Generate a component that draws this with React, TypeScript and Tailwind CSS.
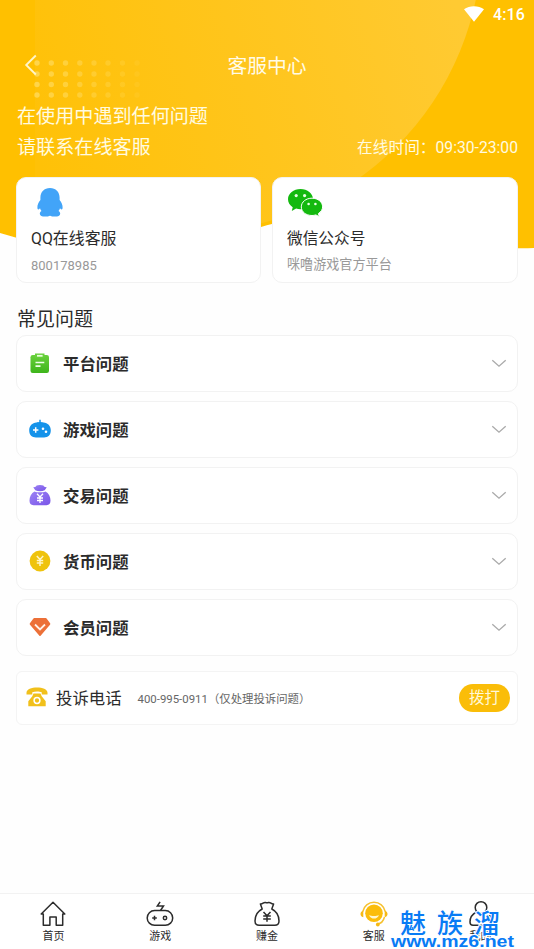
import React from "react";

const QQIcon = () => (
  <svg width="26" height="29" viewBox="0 0 26 29" fill="#42a4f8">
    <path d="M13 0C7.200 0 3.400 4 3.400 9.500v2.600C1.500 14.500.2 17 .4 20c.1 1.700 1.100 1.900 2.600.2.300 1 .8 1.900 1.500 2.700-1.200.7-1.700 1.700-1.700 2.900C2.800 28 5 28.600 8 28.600c2.200 0 4-.4 5-.9 1 .5 2.800.9 5 .9 3 0 5.200-.6 5.200-2.800 0-1.200-.5-2.200-1.700-2.900.7-.8 1.200-1.700 1.500-2.700 1.500 1.700 2.500 1.500 2.600-.2.200-3-1.100-5.500-3-7.900V9.500C22.600 4 18.800 0 13 0Z" />
  </svg>
);

const WechatIcon = () => (
  <svg width="35" height="28" viewBox="0 0 35 28">
    <path fill="#14b90f" d="M12.500 0C5.600 0 0 4.500 0 10.200c0 3.200 1.700 6 4.700 8L3.800 22l4.300-2.400c1.400.4 2.900.6 4.400.6 6.900 0 12.500-4.400 12.500-10C25 4.500 19.400 0 12.500 0Z" />
    <path fill="#14b90f" stroke="#fff" strokeWidth="1" d="M24 9.200c-6.100 0-10.700 3.800-10.700 8.700S17.900 26.500 24 26.500c1.300 0 2.600-.2 3.800-.6l3.500 1.800-.9-3.200c2.600-1.700 4.200-4 4.200-6.600 0-4.900-4.500-8.700-10.600-8.700Z" />
    <g fill="#e8ffe4"><circle cx="8.200" cy="6.600" r="1.600" /><circle cx="16.600" cy="6.600" r="1.600" /><circle cx="20.600" cy="15" r="1.300" /><circle cx="27.400" cy="15" r="1.300" /></g>
  </svg>
);

const PlatformIcon = () => (
  <svg width="22" height="22" viewBox="0 0 22 22">
    <defs><linearGradient id="green" x1="0" y1="0" x2="0" y2="1"><stop stopColor="#68d03b" /><stop offset="1" stopColor="#3eb51b" /></linearGradient></defs>
    <rect x="1.500" y="3" width="18.500" height="18" rx="2.200" fill="url(#green)" />
    <path d="M6 1.500h9.500v4.200H6Z" fill="#68d03b" /><path d="M8 2.900h5.600v1.800H8Z" fill="#eaffdf" />
    <path d="M6.500 10.500h8.800M6.500 14.200h5" stroke="#efffe9" strokeWidth="1.700" />
  </svg>
);

const GameIcon = () => (
  <svg width="22" height="22" viewBox="0 0 22 22">
    <path d="M11 1.700v3.500" stroke="#1593ea" strokeWidth="1.500" />
    <path fill="#1593ea" d="M7.500 4.600c1.500-.7 5.500-.7 7 0 4.200.3 7.300 3.400 7.300 7.700 0 4.800-2.800 7.200-6.800 7.200H7c-4 0-6.800-2.400-6.800-7.200 0-4.300 3.100-7.400 7.300-7.700Z" />
    <path d="M4 12h5.400M6.700 9.300v5.400" stroke="#fff" strokeWidth="1.500" />
    <circle cx="14" cy="10.700" r="1.300" fill="#fff" /><circle cx="17" cy="13.700" r="1.300" fill="#fff" />
  </svg>
);

const TradeIcon = () => (
  <svg width="22" height="22" viewBox="0 0 22 22">
    <defs><linearGradient id="purple" x1="0" y1="0" x2="1" y2="1"><stop stopColor="#9c82f4" /><stop offset="1" stopColor="#7954e8" /></linearGradient></defs>
    <path fill="url(#purple)" d="M6.300 6.200 4.200 3.200C6 3.500 7 2.600 7.600 1.600c1.600-.9 5.200-.9 6.800 0 .6 1 1.600 1.900 3.400 1.600l-2.100 3c-2.600 1.300-6.800 1.300-9.400 0Z" />
    <path fill="url(#purple)" d="M5.500 7.400c3 1.200 8 1.200 11 0 3.200 1.800 5 5 5 9.200 0 3-1.300 4.600-4 4.600h-13c-2.700 0-4-1.600-4-4.600 0-4.200 1.800-7.400 5-9.200Z" />
    <path d="m8 9.800 3 3.200 3-3.200m-3 3.200v6m-3-5h6m-6 2.500h6" stroke="#fff" strokeWidth="1.300" fill="none" />
  </svg>
);

const CoinIcon = () => (
  <svg width="22" height="22" viewBox="0 0 22 22">
    <circle cx="11" cy="11" r="10.400" fill="#efc30c" />
    <path d="m7.800 6 3.200 3.500L14.200 6M11 9.500V16m-3.200-5.500h6.400m-6.400 2.400h6.400" stroke="#fff6c8" strokeWidth="1.500" fill="none" />
  </svg>
);

const MemberIcon = () => (
  <svg width="22" height="22" viewBox="0 0 22 22">
    <path d="M5.200 2h11.600a1 1 0 0 1 .8.400l3.500 4.900a1.200 1.200 0 0 1-.1 1.500l-9.200 10.600a1 1 0 0 1-1.600 0L1 8.800a1.200 1.200 0 0 1-.1-1.500l3.500-4.900a1 1 0 0 1 .8-.4Z" fill="#ec7038" />
    <path d="m6 8.500 5 5 5-5" fill="none" stroke="#fff1e8" strokeWidth="1.800" />
  </svg>
);

const PhoneIcon = () => (
  <svg width="22" height="20" viewBox="0 0 22 20">
    <path fill="#f1c01b" d="M11 .5C5.500.5.500 2.200.500 5.800v1.600h5.800V5.300c2.500-1.100 6.900-1.100 9.400 0v2.100h5.800V5.800C21.500 2.200 16.500.5 11 .5Z" />
    <path fill="#f1c01b" d="M7.500 6.500h7l1.200 2.700 4 5v5.100H2.300v-5.100l4-5Z" />
    <circle cx="11" cy="13.500" r="2.900" fill="#f1c01b" stroke="#fff" strokeWidth="1.500" />
  </svg>
);

const HomeIcon = () => (
  <svg width="28" height="28" viewBox="0 0 28 28" fill="none" stroke="#2c2c2c" strokeWidth="1.500" strokeLinejoin="round" strokeLinecap="round">
    <path d="M4.300 14H2.200L14 2.200 25.800 14h-2.100v11.300h-6.500v-8.200h-6.300v8.200H4.300Z" />
  </svg>
);

const PadIcon = () => (
  <svg width="28" height="28" viewBox="0 0 28 28" fill="none" stroke="#2c2c2c" strokeWidth="1.500">
    <rect x="1.200" y="10.500" width="25.500" height="14.800" rx="7.400" />
    <path d="M14.500 10.500 17.500 6h-6.200l2.800-4.200M6.200 18h4.600M8.500 15.700v4.600" />
    <circle cx="19" cy="18" r="1.700" />
  </svg>
);

const MoneyIcon = () => (
  <svg width="28" height="28" viewBox="0 0 28 28" fill="none" stroke="#2c2c2c" strokeWidth="1.500" strokeLinejoin="round">
    <path d="M9.200 9 7.400 3.900c2.300.5 3-1.900 5-1.400 1.100.4 2.100.4 3.200 0 2-.5 2.700 1.900 5 1.400L18.800 9c4.900 2.400 7.200 6.800 7.200 12 0 2.900-1.400 4.300-4.200 4.300H6.200C3.400 25.300 2 23.900 2 21c0-5.200 2.300-9.600 7.200-12Z" />
    <path d="m10.500 12 3.500 3.800 3.500-3.800M14 15.800v6M10.200 16h7.600m-7.600 3h7.600" />
  </svg>
);

const ServiceIcon = () => (
  <svg width="28" height="28" viewBox="0 0 28 28">
    <circle cx="14" cy="13.300" r="8.800" fill="#fbbd0c" />
    <path d="M2.800 11.500a11.400 11.400 0 0 1 22.400 0M24.500 17c-1 4-4 6.700-7 7" stroke="#f6c232" strokeWidth="1.500" fill="none" />
    <path d="M3.300 10.800v6.400C1.200 16.800.5 15.300.5 14s.7-2.900 2.800-3.200Zm21.400 0v6.400c2.100-.4 2.800-1.900 2.800-3.200s-.7-2.900-2.800-3.200Z" fill="#f6b916" />
    <circle cx="17.800" cy="24.500" r="1.900" fill="#f6b916" />
    <path d="M9 15.200c2.500.9 7.500.9 10 0-1 2.500-3 3.300-5 3.300s-4-.8-5-3.300Z" fill="#fff6cf" />
  </svg>
);

const ProfileIcon = () => (
  <svg width="28" height="28" viewBox="0 0 28 28" fill="none" stroke="#2c2c2c" strokeWidth="1.500">
    <circle cx="14" cy="7.500" r="5.800" /><path d="M9.500 12C5.500 14 3 17.500 3 22c0 2.300 1 3.300 3 3.300h16c2 0 3-1 3-3.300 0-4.500-2.500-8-6.500-10" />
  </svg>
);

const Chevron = () => (
  <svg className="ml-auto" width="16" height="9" viewBox="0 0 16 9" fill="none" stroke="#aaa" strokeWidth="1.300"><path d="m1.300 1.200 6.700 6 6.700-6" /></svg>
);

const questions = [
  { label: "平台问题", Icon: PlatformIcon },
  { label: "游戏问题", Icon: GameIcon },
  { label: "交易问题", Icon: TradeIcon },
  { label: "货币问题", Icon: CoinIcon },
  { label: "会员问题", Icon: MemberIcon },
];

const tabs = [
  { label: "首页", Icon: HomeIcon },
  { label: "游戏", Icon: PadIcon },
  { label: "赚金", Icon: MoneyIcon },
  { label: "客服", Icon: ServiceIcon },
  { label: "我的", Icon: ProfileIcon },
];

const HeaderArt = () => (
  <svg className="absolute left-0 top-0 -z-10" width="534" height="260" viewBox="0 0 534 260">
    <defs>
      <linearGradient id="glow" gradientUnits="userSpaceOnUse" x1="35" y1="150" x2="460" y2="20">
        <stop stopColor="#ffc107" /><stop offset=".5" stopColor="#ffc51c" /><stop offset="1" stopColor="#ffca32" />
      </linearGradient>
      <clipPath id="wave"><path d="M0 0h534v248C480 250 430 238 370 226 330 218 292 217 261 227 190 256 85 260 0 233Z" /></clipPath>
      <clipPath id="right"><path d="M35 0h499v260H35Z" /></clipPath>
    </defs>
    <g clipPath="url(#wave)">
      <path d="M0 0h534v260H0Z" fill="#ffc000" />
      <circle cx="190" cy="-60" r="292" fill="url(#glow)" clipPath="url(#right)" />
      {[63, 74, 84.500, 95].map((y) =>
        [37, 51.300, 65.500, 79.800, 94, 108, 122.500, 137].map((x, i) => (
          <circle key={`${x}-${y}`} cx={x} cy={y} r="2.700" fill="#ffdd66" opacity={0.7 - i * 0.08} />
        ))
      )}
    </g>
  </svg>
);

export default function App() {
  return (
    <div className="relative isolate flex h-[949px] w-[534px] flex-col overflow-hidden bg-[#fefefe] text-[#2b2b2b] [font-family:Roboto,'Noto_Sans_CJK_SC',sans-serif]">
      <HeaderArt />
      <div className="flex h-7 shrink-0 items-center justify-end gap-[9px] pr-[9px] text-white">
        <svg width="20" height="16" viewBox="0 0 20 16" fill="#fff"><path d="M0 3.200C5.500-.7 14.500-.7 20 3.200L10 15.700Z" /></svg>
        <span className="pt-px text-[16px] leading-7 font-medium tracking-[0.1px]">4:16</span>
      </div>
      <header className="grid h-[73px] shrink-0 grid-cols-3 items-center pl-6 pr-6 text-[#fffbe8]">
        <svg width="14" height="22" viewBox="0 0 14 22" fill="none" stroke="#fff5c9" strokeWidth="1.900"><path d="M11.800 1.500 2.200 11l9.600 9.500" /></svg>
        <h1 className="pt-1 text-center text-[19.800px] leading-[30px]">客服中心</h1>
      </header>
      <section className="flex h-[76px] shrink-0 justify-between px-4 text-[#fffbe0]">
        <p className="pl-px text-[19.100px] leading-[31px]">在使用中遇到任何问题<br />请联系在线客服</p>
        <p className="pt-[31px] text-[15.700px] leading-[31px]">在线时间：09:30-23:00</p>
      </section>

      <section className="grid h-[106px] shrink-0 grid-cols-[245px_246px] gap-[11px] px-4">
        <div className="flex flex-col rounded-[10px] border border-[#f2f2f2] bg-white pl-[14px]">
          <div className="ml-[6px] flex h-[49px] items-center"><QQIcon /></div>
          <h2 className="text-[15.900px] leading-6">QQ在线客服</h2>
          <p className="mt-[3px] text-[13px] leading-6 text-[#999]">800178985</p>
        </div>
        <div className="flex flex-col rounded-[10px] border border-[#f2f2f2] bg-white pl-[14px]">
          <div className="ml-px flex h-[49px] items-center"><WechatIcon /></div>
          <h2 className="text-[15.700px] leading-6">微信公众号</h2>
          <p className="mt-[2px] text-[13.100px] leading-6 text-[#999]">咪噜游戏官方平台</p>
        </div>
      </section>

      <main className="flex flex-1 flex-col px-4">
        <h2 className="mt-[22px] h-[30px] shrink-0 pl-px text-[19px] leading-[30px]">常见问题</h2>
        <ul className="flex flex-col gap-[9px]">
          {questions.map(({ label, Icon }) => (
            <li key={label} className="flex h-[57px] items-center rounded-[10px] border border-[#f2f2f2] bg-white pl-3 pr-[10px]">
              <span className="pb-[2px]"><Icon /></span>
              <span className="ml-3 pt-[2px] text-[16.400px] leading-6 font-bold">{label}</span>
              <Chevron />
            </li>
          ))}
        </ul>
        <div className="mt-[15px] flex h-[54px] items-center rounded-md border border-[#f4f4f4] bg-white pl-[9px] pr-[7px]">
          <span className="pb-[2px]"><PhoneIcon /></span>
          <span className="ml-2 pt-[2px] text-[16.400px] leading-6">投诉电话</span>
          <span className="ml-4 pt-[2px] text-[11.400px] leading-6 text-[#666]">400-995-0911（仅处理投诉问题）</span>
          <button className="ml-auto h-7 w-[51px] rounded-full bg-[#fabd08] text-[15.500px] leading-7 text-[#fff8d8]">拨打</button>
        </div>
      </main>

      <nav className="grid h-14 shrink-0 grid-cols-5 border-t border-[#f2f2f2] bg-white pt-[6px]">
        {tabs.map(({ label, Icon }) => (
          <div key={label} className="flex flex-col items-center">
            <Icon />
            <span className="mt-[2px] text-[11px] leading-[14px]">{label}</span>
          </div>
        ))}
      </nav>

      <div className="absolute left-[391px] top-[906px] flex w-[125px] flex-col whitespace-nowrap text-[#087bf5] [-webkit-text-stroke:2px_#fefefe] [paint-order:stroke_fill]">
        <span className="pl-[9px] text-[26px] leading-8 font-medium tracking-[11px] [font-family:'Noto_Sans_CJK_SC',sans-serif]">魅族溜</span>
        <span className="-mt-[3px] origin-left scale-x-[1.22] text-[16px] leading-[14px] font-bold [font-family:'Liberation_Sans',sans-serif]">www.mz6.net</span>
      </div>
    </div>
  );
}
